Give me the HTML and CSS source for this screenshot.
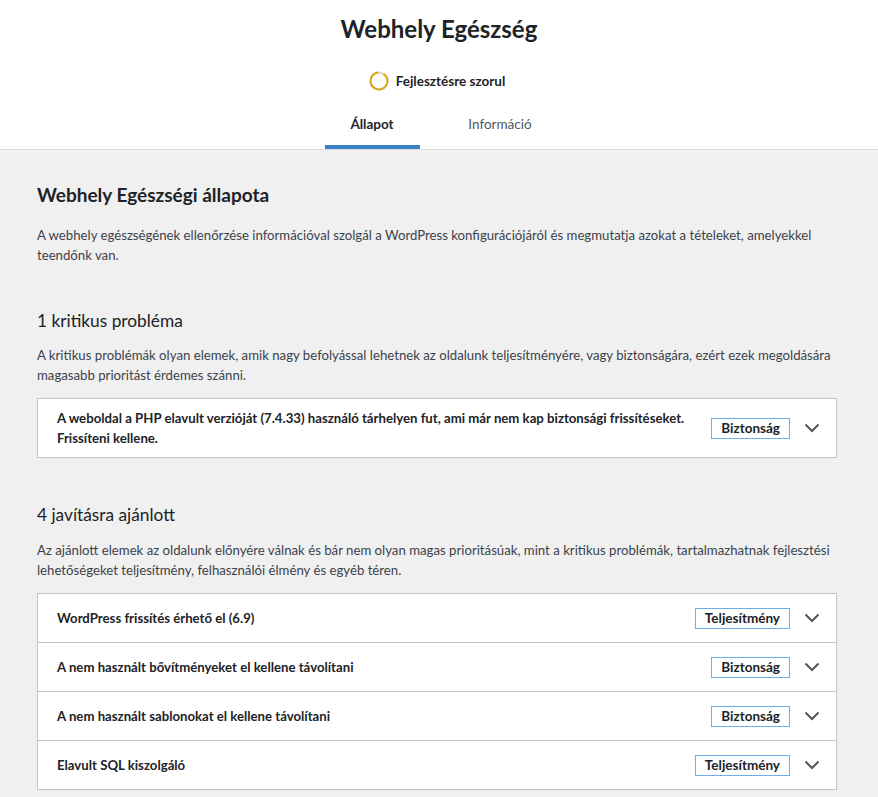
FILE: index.html
```html
<!DOCTYPE html>
<html lang="hu">
<head>
<meta charset="utf-8">
<title>Webhely Egészség</title>
<link rel="stylesheet" href="styles.css">
</head>
<body>
<header class="header">
  <h1 class="title">Webhely Egészség</h1>
  <div class="status">
    <svg class="ring" width="20" height="20" viewBox="0 0 20 20">
      <circle cx="10" cy="10" r="8.5" fill="none" stroke="#dcdcde" stroke-width="2"/>
      <circle cx="10" cy="10" r="8.5" fill="none" stroke="#dba617" stroke-width="2" stroke-dasharray="48 53.4" transform="rotate(-58 10 10)"/>
    </svg>
    <span class="status-text">Fejlesztésre szorul</span>
  </div>
  <nav class="tabs">
    <a class="tab active">Állapot</a>
    <a class="tab">Információ</a>
  </nav>
</header>
<main class="body">
  <h2 class="h2">Webhely Egészségi állapota</h2>
  <p class="p">A webhely egészségének ellenőrzése információval szolgál a WordPress konfigurációjáról és megmutatja azokat a tételeket, amelyekkel<br>teendőnk van.</p>

  <h3 class="h3">1 kritikus probléma</h3>
  <p class="p sub">A kritikus problémák olyan elemek, amik nagy befolyással lehetnek az oldalunk teljesítményére, vagy biztonságára, ezért ezek megoldására<br>magasabb prioritást érdemes szánni.</p>
  <div class="accordion">
    <div class="row tall">
      <span class="row-title">A weboldal a PHP elavult verzióját (7.4.33) használó tárhelyen fut, ami már nem kap biztonsági frissítéseket.<br>Frissíteni kellene.</span>
      <span class="badge">Biztonság</span>
      <svg class="chev" width="16" height="10" viewBox="0 0 16 10"><path d="M1.5 1.5 L8 8 L14.5 1.5" fill="none" stroke="#50575e" stroke-width="2"/></svg>
    </div>
  </div>

  <h3 class="h3 second">4 javításra ajánlott</h3>
  <p class="p sub">Az ajánlott elemek az oldalunk előnyére válnak és bár nem olyan magas prioritásúak, mint a kritikus problémák, tartalmazhatnak fejlesztési<br>lehetőségeket teljesítmény, felhasználói élmény és egyéb téren.</p>
  <div class="accordion second-acc">
    <div class="row">
      <span class="row-title">WordPress frissítés érhető el (6.9)</span>
      <span class="badge">Teljesítmény</span>
      <svg class="chev" width="16" height="10" viewBox="0 0 16 10"><path d="M1.5 1.5 L8 8 L14.5 1.5" fill="none" stroke="#50575e" stroke-width="2"/></svg>
    </div>
    <div class="row">
      <span class="row-title">A nem használt bővítményeket el kellene távolítani</span>
      <span class="badge">Biztonság</span>
      <svg class="chev" width="16" height="10" viewBox="0 0 16 10"><path d="M1.5 1.5 L8 8 L14.5 1.5" fill="none" stroke="#50575e" stroke-width="2"/></svg>
    </div>
    <div class="row">
      <span class="row-title">A nem használt sablonokat el kellene távolítani</span>
      <span class="badge">Biztonság</span>
      <svg class="chev" width="16" height="10" viewBox="0 0 16 10"><path d="M1.5 1.5 L8 8 L14.5 1.5" fill="none" stroke="#50575e" stroke-width="2"/></svg>
    </div>
    <div class="row">
      <span class="row-title">Elavult SQL kiszolgáló</span>
      <span class="badge">Teljesítmény</span>
      <svg class="chev" width="16" height="10" viewBox="0 0 16 10"><path d="M1.5 1.5 L8 8 L14.5 1.5" fill="none" stroke="#50575e" stroke-width="2"/></svg>
    </div>
  </div>
</main>
</body>
</html>
```
FILE: styles.css
```css
html, body {
  margin: 0;
  padding: 0;
}
body {
  background: #f0f0f1;
  color: #1d2327;
  font-family: "Lato", "Noto Sans", sans-serif;
  font-size: 13.2px;
  line-height: 1.5;
}
.header {
  background: #fff;
  border-bottom: 1px solid #dcdcde;
  display: flex;
  flex-direction: column;
  align-items: center;
  height: 150px;
  box-sizing: border-box;
}
.title {
  margin: 12px 0 0;
  font-size: 24px;
  font-weight: 700;
  line-height: 34px;
}
.status {
  display: flex;
  align-items: center;
  gap: 7px;
  margin-top: 24px;
  margin-left: -4px;
  height: 22px;
}
.ring {
  display: block;
}
.status-text {
  font-weight: 700;
  font-size: 13.5px;
}
.tabs {
  display: flex;
  margin-top: auto;
}
.tab {
  display: block;
  height: 45px;
  box-sizing: border-box;
  line-height: 40px;
  color: #50575e;
  border-bottom: 4px solid transparent;
  text-align: center;
  font-size: 13.5px;
}
.tab.active {
  color: #1d2327;
  font-weight: 700;
  border-bottom-color: #3582c4;
  width: 95px;
  margin-left: -6px;
}
.tab + .tab {
  width: 95px;
  margin-left: 33px;
}
.body {
  padding: 23px 0 0 37px;
  width: 800px;
}
.h2 {
  font-size: 19px;
  font-weight: 700;
  margin: 8px 0 0;
  line-height: 28px;
}
.p {
  margin: 16px 0 0;
  line-height: 20px;
  color: #3c434a;
  white-space: nowrap;
}
.p.sub {
  margin-top: 10px;
}
.h3 {
  font-size: 17.3px;
  font-weight: 400;
  margin: 42px 0 0;
  line-height: 28px;
}
.h3.second {
  margin-top: 43px;
}
.p.sub + .accordion {
  margin-top: 13px;
}
.accordion {
  background: #fff;
  border: 1px solid #c3c4c7;
  width: 798px;
}
.accordion.second-acc {
  margin-top: 13px;
}
.h3.second + .p.sub {
  margin-top: 11px;
}
.row {
  display: flex;
  align-items: center;
  height: 48px;
  padding: 0 16px 0 19px;
  border-top: 1px solid #c3c4c7;
}
.row:first-child {
  border-top: none;
}
.row.tall {
  height: 58px;
}
.row-title {
  flex: 1;
  font-weight: 700;
  line-height: 20px;
  padding-right: 12px;
  white-space: nowrap;
}
.badge {
  border: 1px solid #72aee6;
  padding: 0 9px;
  line-height: 19px;
  font-weight: 700;
  color: #1d2327;
  font-size: 13.5px;
}
.chev {
  margin-left: 14px;
  margin-right: 0;
  display: block;
}
```
